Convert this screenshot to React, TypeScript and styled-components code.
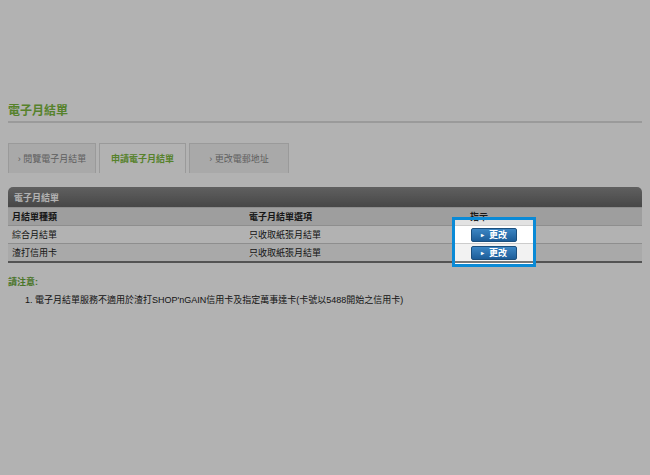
import React from "react";
import styled, { createGlobalStyle } from "styled-components";

const Global = createGlobalStyle`
  html, body { margin: 0; padding: 0; background: #fff; }
  body { font-family: "Liberation Sans", "Noto Sans CJK TC", sans-serif; font-size: 9px; color: #333; }
`;

const Page = styled.div`
  position: relative;
  width: 650px;
  height: 475px;
  overflow: hidden;
  padding: 103px 8px 0;
  box-sizing: border-box;
`;

const Title = styled.h1`
  margin: 0;
  font-size: 12px;
  line-height: 16px;
  font-weight: bold;
  color: #7cba3e;
  padding-bottom: 2px;
  border-bottom: 2px solid #ddd;
`;

const Tabs = styled.div`
  display: flex;
  gap: 3px;
  margin-top: 20px;
  height: 30px;
`;

const Tab = styled.div<{ $active?: boolean; $w: number }>`
  width: ${(p) => p.$w}px;
  box-sizing: border-box;
  border: 1px solid #ddd;
  border-bottom: none;
  background: ${(p) => (p.$active ? "#fff" : "#f3f3f3")};
  color: ${(p) => (p.$active ? "#7cba3e" : "#888")};
  font-weight: ${(p) => (p.$active ? "bold" : "normal")};
  display: flex;
  align-items: center;
  justify-content: center;
`;

const Table = styled.div`
  margin-top: 14px;
  width: 634px;
  border-bottom: 2px solid #777;
`;

const Caption = styled.div`
  height: 20px;
  border-radius: 5px 5px 0 0;
  background: linear-gradient(#8a8a8a, #666);
  color: #fff;
  font-weight: bold;
  display: flex;
  align-items: center;
  padding-left: 6px;
`;

const Row = styled.div<{ $bg: string; $bold?: boolean }>`
  display: grid;
  grid-template-columns: 237px 221px 1fr;
  height: 17px;
  align-items: center;
  background: ${(p) => p.$bg};
  border-top: 1px solid #ccc;
  font-weight: ${(p) => (p.$bold ? "bold" : "normal")};
  color: #222;
  padding-left: 4px;
`;

const Btn = styled.button`
  width: 46px;
  height: 14px;
  padding: 0;
  border: 1px solid #1b4f7d;
  border-radius: 2px;
  background: linear-gradient(#3c86c4, #1c5d99);
  color: #fff;
  font: bold 9px "Liberation Sans", "Noto Sans CJK TC", sans-serif;
  margin-left: 1px;
  display: flex;
  align-items: center;
  justify-content: center;
  &::before { content: "▸"; font-size: 6px; margin-right: 5px; }
`;

const Note = styled.div`
  margin-top: 12px;
  color: #6aa83a;
  font-weight: bold;
`;

const List = styled.ol`
  margin: 5px 0 0;
  padding-left: 27px;
  color: #222;
`;

const Spot = styled.div`
  position: absolute;
  left: 452px;
  top: 217px;
  width: 84px;
  height: 50px;
  box-sizing: border-box;
  border: 3px solid #0a8ad6;
  box-shadow: 0 0 0 2000px rgba(0, 0, 0, 0.3);
`;

export default function App() {
  return (
    <>
      <Global />
      <Page>
        <Title>電子月結單</Title>
        <Tabs>
          <Tab $w={88}>› 閱覽電子月結單</Tab>
          <Tab $w={87} $active>申請電子月結單</Tab>
          <Tab $w={100}>› 更改電郵地址</Tab>
        </Tabs>
        <Table>
          <Caption>電子月結單</Caption>
          <Row $bg="#e2e2e2" $bold>
            <span>月結單種類</span>
            <span>電子月結單選項</span>
            <span>指示</span>
          </Row>
          <Row $bg="#fff">
            <span>綜合月結單</span>
            <span>只收取紙張月結單</span>
            <span><Btn>更改</Btn></span>
          </Row>
          <Row $bg="#f2f2f2">
            <span>渣打信用卡</span>
            <span>只收取紙張月結單</span>
            <span><Btn>更改</Btn></span>
          </Row>
        </Table>
        <Note>請注意:</Note>
        <List>
          <li>電子月結單服務不適用於渣打SHOP'nGAIN信用卡及指定萬事達卡(卡號以5488開始之信用卡)</li>
        </List>
        <Spot />
      </Page>
    </>
  );
}
